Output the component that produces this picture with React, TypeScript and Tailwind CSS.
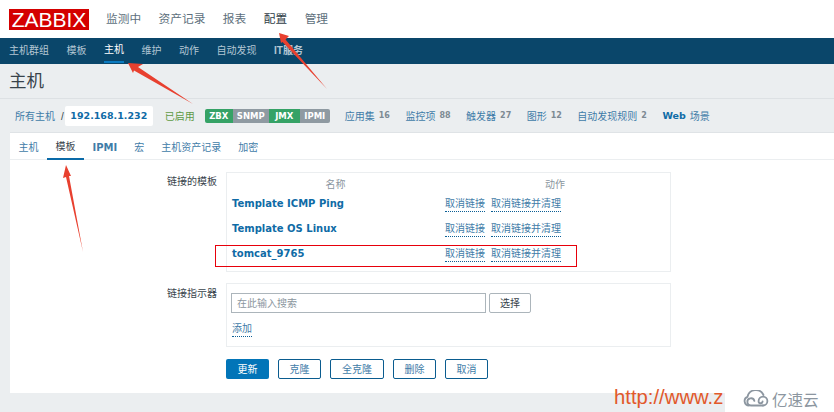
const mainNav = ['监测中', '资产记录', '报表', '配置', '管理'];
const subNav = ['主机群组', '模板', '主机', '维护', '动作', '自动发现', 'IT服务'];
const tabs = ['主机', '模板', 'IPMI', '宏', '主机资产记录', '加密'];
const badges = [
  { label: 'ZBX', width: 'w-[28px]', color: 'bg-[#35a266]' },
  { label: 'SNMP', width: 'w-[36px]', color: 'bg-[#8f9aa2]' },
  { label: 'JMX', width: 'w-[31px]', color: 'bg-[#35a266]' },
  { label: 'IPMI', width: 'w-[30px]', color: 'bg-[#8f9aa2]' },
];
const stats = [
  { label: '应用集', count: '16' },
  { label: '监控项', count: '88' },
  { label: '触发器', count: '27' },
  { label: '图形', count: '12' },
  { label: '自动发现规则', count: '2' },
];
const templates = ['Template ICMP Ping', 'Template OS Linux', 'tomcat_9765'];
const actions = ['克隆', '全克隆', '删除', '取消'];

const sans = 'font-["Liberation_Sans","Noto_Sans_CJK_SC",sans-serif]';
const bold = 'font-["DejaVu_Sans","Noto_Sans_CJK_SC",sans-serif] font-bold';
const redBox = 'absolute left-[215px] top-[245px] w-[362px] h-[22px] border border-solid border-red-600';

function DottedLink({ children }: { children: string }) {
  return (
    <span className="block border-b border-dotted border-[#0b5f95] leading-[14px] text-[#3f7ca8] text-[10px]">
      {children}
    </span>
  );
}

function Arrows() {
  return (
    <svg className="absolute left-0 top-0 pointer-events-none" width="834" height="412" viewBox="0 0 834 412">
      <g fill="#e8402f">
        <polygon points="279,33 289,36 285.5,39.5 327,89 282.5,42 281,43" />
        <polygon points="128,63 143,64 138,67 193,104 134,70.5 133,73" />
        <polygon points="66,165 71,176 69,176 83,252 66,177 63,178" />
      </g>
    </svg>
  );
}

function Watermark() {
  return (
    <div className="absolute left-[614px] top-[385px] h-[27px] w-[220px] flex items-start">
      <span className="font-['Liberation_Sans',sans-serif] text-[20.3px] leading-[24px] text-[#e2592b] w-[111px] shrink-0 whitespace-nowrap">
        http://www.z
      </span>
      <div className="flex-1 h-[27px] bg-white flex items-center pl-[18px] gap-[1px]">
        <svg width="28" height="17" viewBox="0 0 28 17" fill="none" stroke="#8c96a0" strokeWidth="1.8" strokeLinecap="round">
          <path d="M6 15.5a4.5 4.5 0 0 1-1.5-8.7A8.5 8.5 0 0 1 20.5 5" />
          <path d="M20 15.5h-12a3.6 3.6 0 1 1 3.4-4.6" />
          <path d="M20 15.5a4.4 4.4 0 1 0-4.4-4.4 2 2 0 0 0 4 .3" />
        </svg>
        <span className="font-['Noto_Sans_CJK_SC',sans-serif] text-[15.5px] leading-[20px] text-[#8c96a0] whitespace-nowrap">亿速云</span>
      </div>
    </div>
  );
}

export default function App() {
  return (
    <div className={`relative w-[834px] h-[412px] overflow-hidden bg-[#ebeef0] ${sans}`}>
      {/* top header */}
      <header className="h-[38px] bg-white flex items-start pl-[9px]">
        <div className="mt-[9px] w-[80px] h-[21px] bg-[#d40000] text-white text-[21px] leading-[21px] text-center font-['Liberation_Sans',sans-serif]">
          ZABBIX
        </div>
        <nav className="ml-[17px] flex gap-[17.5px] h-[38px] items-center">
          {mainNav.map((item) => (
            <span key={item} className={`text-[11.7px] ${item === '配置' ? 'text-[#2f3d46]' : 'text-[#5d6f7c]'}`}>
              {item}
            </span>
          ))}
        </nav>
      </header>

      {/* sub nav */}
      <nav className="h-[26px] bg-[#0a466a] flex gap-[17.5px] pl-[9px]">
        {subNav.map((item) => (
          <span
            key={item}
            className={`h-[25px] flex items-center text-[10px] ${
              item === '主机' ? 'text-white border-b-2 border-[#0a7ac0]' : 'text-[#b4c7d4]'
            } ${item === 'IT服务' ? 'font-semibold' : ''}`}
          >
            {item}
          </span>
        ))}
      </nav>

      {/* page title */}
      <div className="h-[35px] border-b border-[#dde1e4] pl-[9px] flex items-center">
        <h1 className="text-[17.5px] text-[#38434b] font-normal">主机</h1>
      </div>

      {/* host filter row */}
      <div className="h-[33px] flex items-center pl-[15px] pt-[1px] text-[10px] text-[#3f7ca8]">
        <span>所有主机</span>
        <span className="ml-[6px] text-[#38434b]">/</span>
        <span className={`ml-[1px] w-[88px] h-[20px] bg-white rounded-[2px] flex items-center justify-center text-[9.5px] text-[#0f6ba6] ${bold}`}>
          192.168.1.232
        </span>
        <span className="ml-[12px] text-[#5e9a45]">已启用</span>
        <div className="ml-[10px] flex h-[14px] rounded-[2px] overflow-hidden">
          {badges.map((b) => (
            <span key={b.label} className={`${b.width} ${b.color} flex items-center justify-center text-white text-[8.5px] ${bold}`}>
              {b.label}
            </span>
          ))}
        </div>
        <div className="ml-[15px] flex gap-[15.5px] items-center">
          {stats.map((s) => (
            <span key={s.label} className="flex items-center gap-[4px] whitespace-nowrap">
              {s.label}
              <span className={`text-[8px] text-[#7d8a93] ${bold}`}>{s.count}</span>
            </span>
          ))}
          <span className="flex items-center gap-[4px] whitespace-nowrap">
            <span className={`text-[9.5px] text-[#0f6ba6] ${bold}`}>Web</span>
            场景
          </span>
        </div>
      </div>

      {/* main panel */}
      <section className="ml-[10px] h-[261px] bg-white border-t border-[#dfe3e6]">
        <div className="h-[27px] flex border-b border-[#ebeef0]">
          {tabs.map((tab) => (
            <span
              key={tab}
              className={`h-[27px] px-[8.5px] pt-[1px] flex items-center text-[10px] ${
                tab === '模板' ? 'text-[#38434b] border-b-2 border-[#0a6aa8]' : 'text-[#3f7ca8]'
              } ${tab === 'IPMI' ? `text-[9.5px] text-[#0f6ba6] ${bold}` : ''}`}
            >
              {tab}
            </span>
          ))}
        </div>

        <div className="mt-[12px] flex">
          <div className="w-[207px] text-right text-[10px] text-[#38434b] pt-[3px] leading-[14px]">链接的模板</div>
          <div className="ml-[9px] w-[445px] h-[100px] border border-[#ebeef0] pl-[5px] pt-[5px]">
            <div className="flex h-[13px] text-[10px] text-[#8b969e] items-center">
              <span className="w-[207px] text-center">名称</span>
              <span className="ml-[6px] w-[120px] text-right">动作</span>
            </div>
            {templates.map((name) => (
              <div key={name} className="flex h-[25px] items-center">
                <span className={`w-[213px] text-[10px] text-[#0f6ba6] ${bold}`}>{name}</span>
                <div className="flex gap-[6px] pt-[1px]">
                  <DottedLink>取消链接</DottedLink>
                  <DottedLink>取消链接并清理</DottedLink>
                </div>
              </div>
            ))}
          </div>
        </div>

        <div className="mt-[11px] flex">
          <div className="w-[207px] text-right text-[10px] text-[#38434b] pt-[4px] leading-[14px]">链接指示器</div>
          <div className="ml-[9px] w-[445px] h-[64px] border border-[#ebeef0] pl-[4px] pt-[9px]">
            <div className="flex gap-[3px]">
              <div className="w-[255px] h-[20px] border border-[#acb5bb] pl-[5px] flex items-center text-[10px] text-[#8b969e]">
                在此输入搜索
              </div>
              <div className="w-[42px] h-[20px] border border-[#acb5bb] rounded-[2px] flex items-center justify-center text-[10px] text-[#38434b]">
                选择
              </div>
            </div>
            <div className="mt-[9px] pl-[1px] flex">
              <DottedLink>添加</DottedLink>
            </div>
          </div>
        </div>

        <div className="mt-[12px] ml-[216px] flex gap-[9px]">
          <span className="w-[43px] h-[20px] rounded-[2px] bg-[#0275b8] text-white text-[10px] flex items-center justify-center">更新</span>
          {actions.map((a) => (
            <span
              key={a}
              className={`${a === '全克隆' ? 'w-[54px]' : 'w-[43px]'} h-[20px] rounded-[2px] border border-[#0a5c8f] text-[#3f7ca8] text-[10px] flex items-center justify-center`}
            >
              {a}
            </span>
          ))}
        </div>
      </section>

      {/* annotations pasted over the screenshot */}
      <div className={redBox}></div>
      <Arrows />
      <Watermark />
    </div>
  );
}
